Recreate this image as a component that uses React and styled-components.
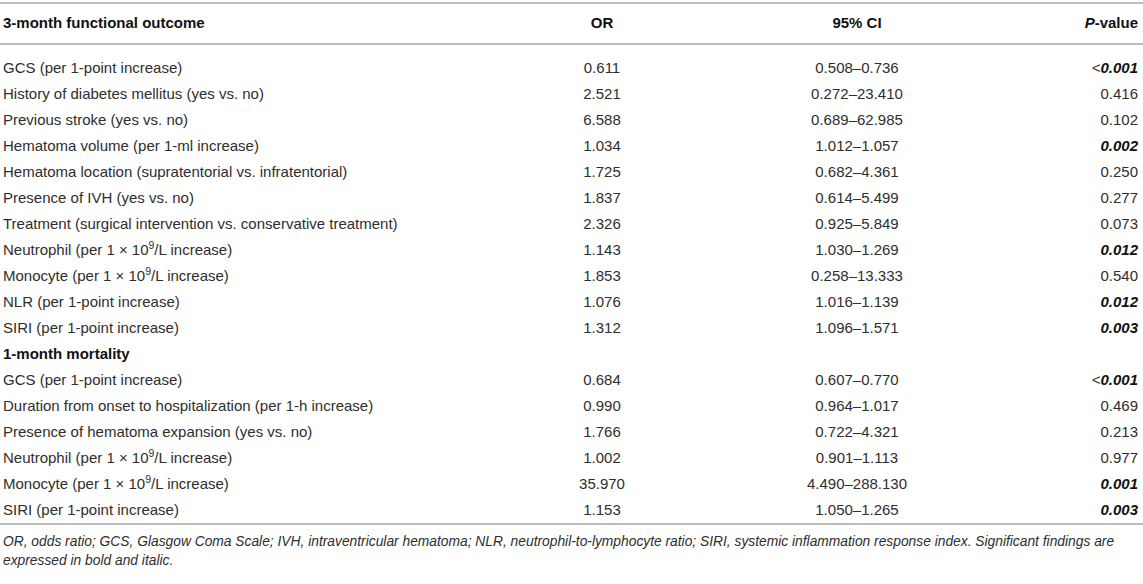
import styled, { createGlobalStyle } from 'styled-components';

const GlobalStyle = createGlobalStyle`
  html, body {
    margin: 0;
    padding: 0;
    background: #ffffff;
  }
  body {
    font-family: "Liberation Sans", Arial, sans-serif;
    color: #2e2e2e;
  }
`;

const Page = styled.div`
  width: 1143px;
  padding-top: 2px;
`;

const Table = styled.table`
  width: 1143px;
  border-collapse: collapse;
  table-layout: fixed;
  font-size: 15px;
  line-height: 18px;
`;

const HeadRow = styled.tr`
  border-top: 2px solid #bdbdbd;
  border-bottom: 2px solid #bdbdbd;
`;

const Th = styled.th`
  padding: 10px ${(p) => (p.$align === 'right' ? '5px' : '0')} 11px
    ${(p) => (p.$align === 'left' ? '3px' : '0')};
  text-align: ${(p) => p.$align || 'center'};
  font-weight: 700;
  color: #111;
`;

const Row = styled.tr`
  td {
    padding-top: ${(p) => (p.$first ? '14px' : '4px')};
    padding-bottom: 4px;
  }
  ${(p) => p.$last && 'border-bottom: 2px solid #bdbdbd;'}
`;

const Td = styled.td`
  padding-left: ${(p) => (p.$align === 'left' ? '3px' : '0')};
  padding-right: ${(p) => (p.$align === 'right' ? '5px' : '0')};
  text-align: ${(p) => p.$align || 'center'};
  white-space: nowrap;
  font-weight: ${(p) => (p.$bold ? 700 : 400)};
  color: ${(p) => (p.$bold ? '#111' : 'inherit')};
`;

const Sig = styled.span`
  font-weight: 700;
  font-style: italic;
  color: #111;
`;

const Sup = styled.sup`
  font-size: 10.5px;
  line-height: 0;
`;

const Footnote = styled.p`
  margin: 0;
  padding: 7px 0 0 3px;
  font-size: 13.8px;
  line-height: 19px;
  font-style: italic;
  white-space: nowrap;
  color: #2e2e2e;
`;

const per109 = (name) => (
  <>
    {name} (per 1 × 10<Sup>9</Sup>/L increase)
  </>
);

const sections = [
  {
    title: null,
    rows: [
      ['GCS (per 1-point increase)', '0.611', '0.508–0.736', '<0.001', true],
      ['History of diabetes mellitus (yes vs. no)', '2.521', '0.272–23.410', '0.416'],
      ['Previous stroke (yes vs. no)', '6.588', '0.689–62.985', '0.102'],
      ['Hematoma volume (per 1-ml increase)', '1.034', '1.012–1.057', '0.002', true],
      ['Hematoma location (supratentorial vs. infratentorial)', '1.725', '0.682–4.361', '0.250'],
      ['Presence of IVH (yes vs. no)', '1.837', '0.614–5.499', '0.277'],
      ['Treatment (surgical intervention vs. conservative treatment)', '2.326', '0.925–5.849', '0.073'],
      [per109('Neutrophil'), '1.143', '1.030–1.269', '0.012', true],
      [per109('Monocyte'), '1.853', '0.258–13.333', '0.540'],
      ['NLR (per 1-point increase)', '1.076', '1.016–1.139', '0.012', true],
      ['SIRI (per 1-point increase)', '1.312', '1.096–1.571', '0.003', true],
    ],
  },
  {
    title: '1-month mortality',
    rows: [
      ['GCS (per 1-point increase)', '0.684', '0.607–0.770', '<0.001', true],
      ['Duration from onset to hospitalization (per 1-h increase)', '0.990', '0.964–1.017', '0.469'],
      ['Presence of hematoma expansion (yes vs. no)', '1.766', '0.722–4.321', '0.213'],
      [per109('Neutrophil'), '1.002', '0.901–1.113', '0.977'],
      [per109('Monocyte'), '35.970', '4.490–288.130', '0.001', true],
      ['SIRI (per 1-point increase)', '1.153', '1.050–1.265', '0.003', true],
    ],
  },
];

function PValue({ value, sig }) {
  if (!sig) return value;
  if (value.startsWith('<')) {
    return (
      <>
        <span>&lt;</span>
        <Sig>{value.slice(1)}</Sig>
      </>
    );
  }
  return <Sig>{value}</Sig>;
}

export default function App() {
  const total = sections.reduce((n, s) => n + s.rows.length + (s.title ? 1 : 0), 0);
  let index = 0;

  return (
    <Page>
      <GlobalStyle />
      <Table>
        <colgroup>
          <col style={{ width: 520 }} />
          <col style={{ width: 164 }} />
          <col style={{ width: 346 }} />
          <col style={{ width: 113 }} />
        </colgroup>
        <thead>
          <HeadRow>
            <Th $align="left">3-month functional outcome</Th>
            <Th>OR</Th>
            <Th>95% CI</Th>
            <Th $align="right">
              <i>P</i>-value
            </Th>
          </HeadRow>
        </thead>
        <tbody>
          {sections.map((section) => {
            const out = [];
            if (section.title) {
              index += 1;
              out.push(
                <Row key={section.title} $first={index === 1} $last={index === total}>
                  <Td $align="left" $bold>
                    {section.title}
                  </Td>
                  <Td />
                  <Td />
                  <Td />
                </Row>
              );
            }
            section.rows.forEach(([label, or, ci, p, sig], i) => {
              index += 1;
              out.push(
                <Row key={`${section.title}-${i}`} $first={index === 1} $last={index === total}>
                  <Td $align="left">{label}</Td>
                  <Td>{or}</Td>
                  <Td>{ci}</Td>
                  <Td $align="right">
                    <PValue value={p} sig={sig} />
                  </Td>
                </Row>
              );
            });
            return out;
          })}
        </tbody>
      </Table>
      <Footnote>
        OR, odds ratio; GCS, Glasgow Coma Scale; IVH, intraventricular hematoma; NLR,
        neutrophil-to-lymphocyte ratio; SIRI, systemic inflammation response index. Significant
        findings are
        <br />
        expressed in bold and italic.
      </Footnote>
    </Page>
  );
}
